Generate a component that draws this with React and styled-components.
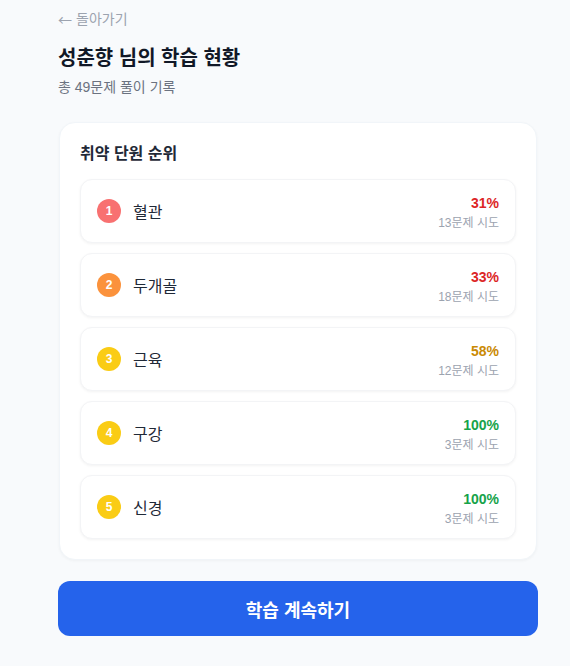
import React from 'react';
import styled, { createGlobalStyle } from 'styled-components';

const GlobalStyle = createGlobalStyle`
  body {
    margin: 0;
    background: #f8fafc;
    font-family: 'Liberation Sans', 'Noto Sans CJK KR', sans-serif;
  }
`;

const units = [
  { rank: 1, name: '혈관', rate: 31, count: 13 },
  { rank: 2, name: '두개골', rate: 33, count: 18 },
  { rank: 3, name: '근육', rate: 58, count: 12 },
  { rank: 4, name: '구강', rate: 100, count: 3 },
  { rank: 5, name: '신경', rate: 100, count: 3 },
];

const badgeColor = (rank) => {
  if (rank === 1) return '#f87171';
  if (rank === 2) return '#fb923c';
  return '#facc15';
};

const rateColor = (rate) => {
  if (rate < 50) return '#dc2626';
  if (rate < 80) return '#ca8a04';
  return '#16a34a';
};

export default function App() {
  return (
    <>
      <GlobalStyle />
      <PageSt>
        <BackLink>
          <ArrowSt>←</ArrowSt> 돌아가기
        </BackLink>
        <TitleSt>성춘향 님의 학습 현황</TitleSt>
        <SubSt>총 49문제 풀이 기록</SubSt>
        <CardSt>
          <CardTitle>취약 단원 순위</CardTitle>
          <ListSt>
            {units.map((u) => (
              <RowSt key={u.rank}>
                <LeftSt>
                  <Badge color={badgeColor(u.rank)}>{u.rank}</Badge>
                  <NameSt>{u.name}</NameSt>
                </LeftSt>
                <RightSt>
                  <RateSt color={rateColor(u.rate)}>{u.rate}%</RateSt>
                  <CountSt>{u.count}문제 시도</CountSt>
                </RightSt>
              </RowSt>
            ))}
          </ListSt>
        </CardSt>
        <ButtonSt>학습 계속하기</ButtonSt>
      </PageSt>
    </>
  );
}

const PageSt = styled.div`
  width: 480px;
  margin-left: 58px;
  padding: 10px 0 30px;
  display: flex;
  flex-direction: column;
`;

const BackLink = styled.div`
  height: 18px;
  display: flex;
  align-items: center;
  gap: 4px;
  font-size: 14px;
  line-height: 18px;
  color: #9ca3af;
  cursor: pointer;
`;

const ArrowSt = styled.span`
  font-family: 'Noto Sans CJK KR', sans-serif;
  line-height: 18px;
`;

const TitleSt = styled.h1`
  margin: 16px 0 0;
  font-size: 20px;
  line-height: 28px;
  font-weight: 700;
  color: #111827;
`;

const SubSt = styled.div`
  margin-top: 6px;
  font-size: 14px;
  line-height: 18px;
  color: #6b7280;
`;

const CardSt = styled.div`
  margin: 26px 1px 0;
  background: #fff;
  border-radius: 16px;
  border: 1px solid #f1f5f9;
  box-shadow: 0 1px 3px rgba(0, 0, 0, 0.04);
  padding: 20px;
`;

const CardTitle = styled.div`
  font-size: 16px;
  line-height: 22px;
  font-weight: 700;
  color: #1f2937;
`;

const ListSt = styled.div`
  margin-top: 14px;
  display: flex;
  flex-direction: column;
  gap: 10px;
`;

const RowSt = styled.div`
  height: 64px;
  box-sizing: border-box;
  padding: 0 16px;
  display: flex;
  align-items: center;
  justify-content: space-between;
  border: 1px solid #f3f4f6;
  border-radius: 12px;
  box-shadow: 0 1px 3px rgba(0, 0, 0, 0.05);
  background: #fff;
`;

const LeftSt = styled.div`
  display: flex;
  align-items: center;
  gap: 12px;
`;

const Badge = styled.div`
  width: 24px;
  height: 24px;
  border-radius: 50%;
  background: ${({ color }) => color};
  color: #fff;
  font-size: 12px;
  font-weight: 700;
  display: flex;
  align-items: center;
  justify-content: center;
`;

const NameSt = styled.div`
  font-size: 16px;
  color: #1f2937;
`;

const RightSt = styled.div`
  margin-top: 3px;
  display: flex;
  flex-direction: column;
  align-items: flex-end;
  gap: 3px;
`;

const RateSt = styled.div`
  font-size: 14px;
  line-height: 18px;
  font-weight: 700;
  color: ${({ color }) => color};
`;

const CountSt = styled.div`
  font-size: 12px;
  line-height: 17px;
  color: #9ca3af;
`;

const ButtonSt = styled.button`
  margin-top: 21px;
  height: 55px;
  border: none;
  border-radius: 12px;
  background: #2563eb;
  color: #fff;
  font-family: inherit;
  font-size: 18px;
  font-weight: 700;
  cursor: pointer;
`;
